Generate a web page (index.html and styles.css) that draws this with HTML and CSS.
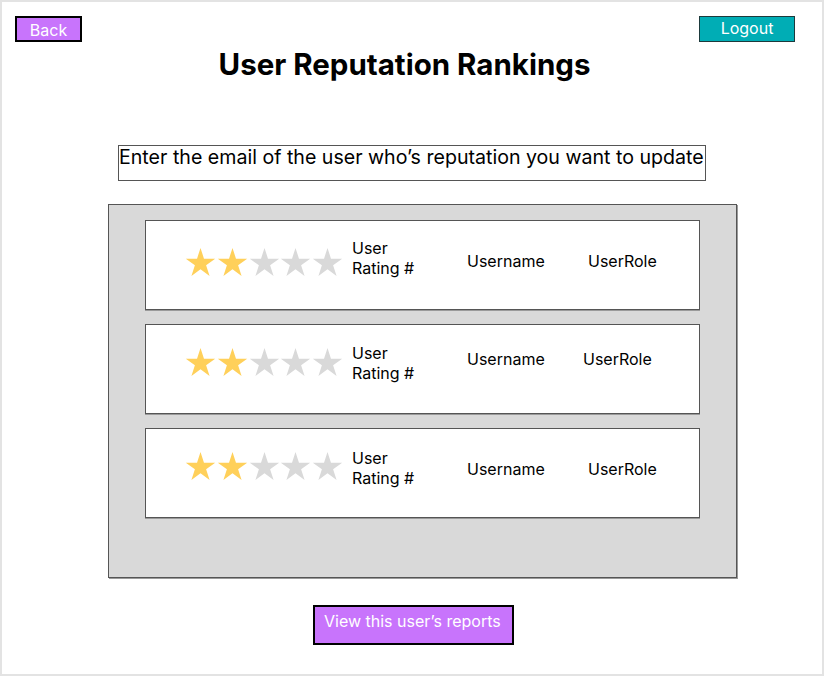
FILE: index.html
```html
<!DOCTYPE html>
<html lang="en">
<head>
<meta charset="utf-8">
<title>User Reputation Rankings</title>
<link rel="stylesheet" href="styles.css">
</head>
<body>
<div class="frame">
  <header class="topbar">
    <button class="btn btn-back">Back</button>
    <button class="btn btn-logout">Logout</button>
  </header>
  <h1 class="title">User Reputation Rankings</h1>
  <div class="email-box">Enter the email of the user who’s reputation you want to update</div>
  <section class="panel">
    <div class="card card-1">
      <div class="stars">
        <svg class="star on" viewBox="0 0 32 30"><polygon points="16,0 19.6,11 31.2,11 21.8,17.9 25.4,29 16,22.1 6.6,29 10.2,17.9 0.8,11 12.4,11"/></svg>
        <svg class="star on" viewBox="0 0 32 30"><polygon points="16,0 19.6,11 31.2,11 21.8,17.9 25.4,29 16,22.1 6.6,29 10.2,17.9 0.8,11 12.4,11"/></svg>
        <svg class="star" viewBox="0 0 32 30"><polygon points="16,0 19.6,11 31.2,11 21.8,17.9 25.4,29 16,22.1 6.6,29 10.2,17.9 0.8,11 12.4,11"/></svg>
        <svg class="star" viewBox="0 0 32 30"><polygon points="16,0 19.6,11 31.2,11 21.8,17.9 25.4,29 16,22.1 6.6,29 10.2,17.9 0.8,11 12.4,11"/></svg>
        <svg class="star" viewBox="0 0 32 30"><polygon points="16,0 19.6,11 31.2,11 21.8,17.9 25.4,29 16,22.1 6.6,29 10.2,17.9 0.8,11 12.4,11"/></svg>
      </div>
      <div class="rating">User<br>Rating #</div>
      <div class="username">Username</div>
      <div class="role">UserRole</div>
    </div>
    <div class="card card-2">
      <div class="stars">
        <svg class="star on" viewBox="0 0 32 30"><polygon points="16,0 19.6,11 31.2,11 21.8,17.9 25.4,29 16,22.1 6.6,29 10.2,17.9 0.8,11 12.4,11"/></svg>
        <svg class="star on" viewBox="0 0 32 30"><polygon points="16,0 19.6,11 31.2,11 21.8,17.9 25.4,29 16,22.1 6.6,29 10.2,17.9 0.8,11 12.4,11"/></svg>
        <svg class="star" viewBox="0 0 32 30"><polygon points="16,0 19.6,11 31.2,11 21.8,17.9 25.4,29 16,22.1 6.6,29 10.2,17.9 0.8,11 12.4,11"/></svg>
        <svg class="star" viewBox="0 0 32 30"><polygon points="16,0 19.6,11 31.2,11 21.8,17.9 25.4,29 16,22.1 6.6,29 10.2,17.9 0.8,11 12.4,11"/></svg>
        <svg class="star" viewBox="0 0 32 30"><polygon points="16,0 19.6,11 31.2,11 21.8,17.9 25.4,29 16,22.1 6.6,29 10.2,17.9 0.8,11 12.4,11"/></svg>
      </div>
      <div class="rating">User<br>Rating #</div>
      <div class="username">Username</div>
      <div class="role">UserRole</div>
    </div>
    <div class="card card-3">
      <div class="stars">
        <svg class="star on" viewBox="0 0 32 30"><polygon points="16,0 19.6,11 31.2,11 21.8,17.9 25.4,29 16,22.1 6.6,29 10.2,17.9 0.8,11 12.4,11"/></svg>
        <svg class="star on" viewBox="0 0 32 30"><polygon points="16,0 19.6,11 31.2,11 21.8,17.9 25.4,29 16,22.1 6.6,29 10.2,17.9 0.8,11 12.4,11"/></svg>
        <svg class="star" viewBox="0 0 32 30"><polygon points="16,0 19.6,11 31.2,11 21.8,17.9 25.4,29 16,22.1 6.6,29 10.2,17.9 0.8,11 12.4,11"/></svg>
        <svg class="star" viewBox="0 0 32 30"><polygon points="16,0 19.6,11 31.2,11 21.8,17.9 25.4,29 16,22.1 6.6,29 10.2,17.9 0.8,11 12.4,11"/></svg>
        <svg class="star" viewBox="0 0 32 30"><polygon points="16,0 19.6,11 31.2,11 21.8,17.9 25.4,29 16,22.1 6.6,29 10.2,17.9 0.8,11 12.4,11"/></svg>
      </div>
      <div class="rating">User<br>Rating #</div>
      <div class="username">Username</div>
      <div class="role">UserRole</div>
    </div>
  </section>
  <button class="btn btn-reports">View this user’s reports</button>
</div>
</body>
</html>
```
FILE: styles.css
```css
* { box-sizing: border-box; }
html, body { margin: 0; padding: 0; background: #ffffff; }
body { font-family: Inter, "Noto Sans", sans-serif; color: #000; }

.frame {
  width: 824px;
  height: 676px;
  border: 2px solid #e3e3e3;
  display: flex;
  flex-direction: column;
  align-items: flex-start;
}

.topbar {
  width: 100%;
  display: flex;
  justify-content: space-between;
  align-items: flex-start;
  padding: 14px 27px 0 13px;
}

.btn {
  font-family: Inter, "Noto Sans", sans-serif;
  font-size: 16px;
  line-height: 20px;
  color: #ffffff;
  margin: 0;
  cursor: pointer;
  display: block;
}

.btn-back {
  width: 67px;
  background: #c874fc;
  border: 2px solid #000;
  padding: 2px 0 0 0;
  text-align: center;
}

.btn-logout {
  width: 96px;
  background: #00adb5;
  border: 1px solid #1d3a3c;
  padding: 1px 0 3px 0;
  text-align: center;
}

.title {
  align-self: stretch;
  margin: 4px 0 0 0;
  padding-right: 15px;
  font-size: 29.5px;
  line-height: 36px;
  font-weight: 700;
  text-align: center;
}

.email-box {
  margin: 63px 0 0 116px;
  width: 588px;
  height: 36px;
  border: 1px solid #555;
  font-size: 19.6px;
  line-height: 22px;
  padding: 0;
  white-space: nowrap;
}

.panel {
  margin: 23px 0 0 106px;
  width: 629px;
  height: 374px;
  background: #d9d9d9;
  border: 1px solid #555;
  box-shadow: 1px 1px 0 #9a9a9a;
  padding: 15px 0 0 36px;
  display: flex;
  flex-direction: column;
  gap: 14px;
}

.card {
  width: 555px;
  height: 90px;
  background: #ffffff;
  border: 1px solid #555;
  box-shadow: 0 1px 0 #9a9a9a;
  display: flex;
  align-items: flex-start;
  padding-left: 39px;
  font-size: 16px;
  line-height: 20px;
}

.stars {
  display: flex;
  gap: 0.8px;
  width: 158px;
  flex-shrink: 0;
}

.star { width: 31px; height: 29px; display: block; flex-shrink: 0; }
.star polygon { fill: #d9d9d9; }
.star.on polygon { fill: #ffd05a; }

.rating { margin-left: 9px; width: 115px; }
.username { width: 121px; }

.card-1 .stars { margin-top: 27px; }
.card-1 .rating { margin-top: 17px; }
.card-1 .username, .card-1 .role { margin-top: 30px; }

.card-2 .stars { margin-top: 23px; }
.card-2 .rating { margin-top: 18px; }
.card-2 .username { margin-top: 24px; width: 116px; }
.card-2 .role { margin-top: 24px; }

.card-3 .stars { margin-top: 23px; }
.card-3 .rating { margin-top: 19px; }
.card-3 .username, .card-3 .role { margin-top: 30px; }

.btn-reports {
  margin: 27px 0 0 311px;
  width: 201px;
  background: #c874fc;
  border: 2px solid #000;
  padding: 4px 0 12px 9px;
  text-align: left;
}
```
